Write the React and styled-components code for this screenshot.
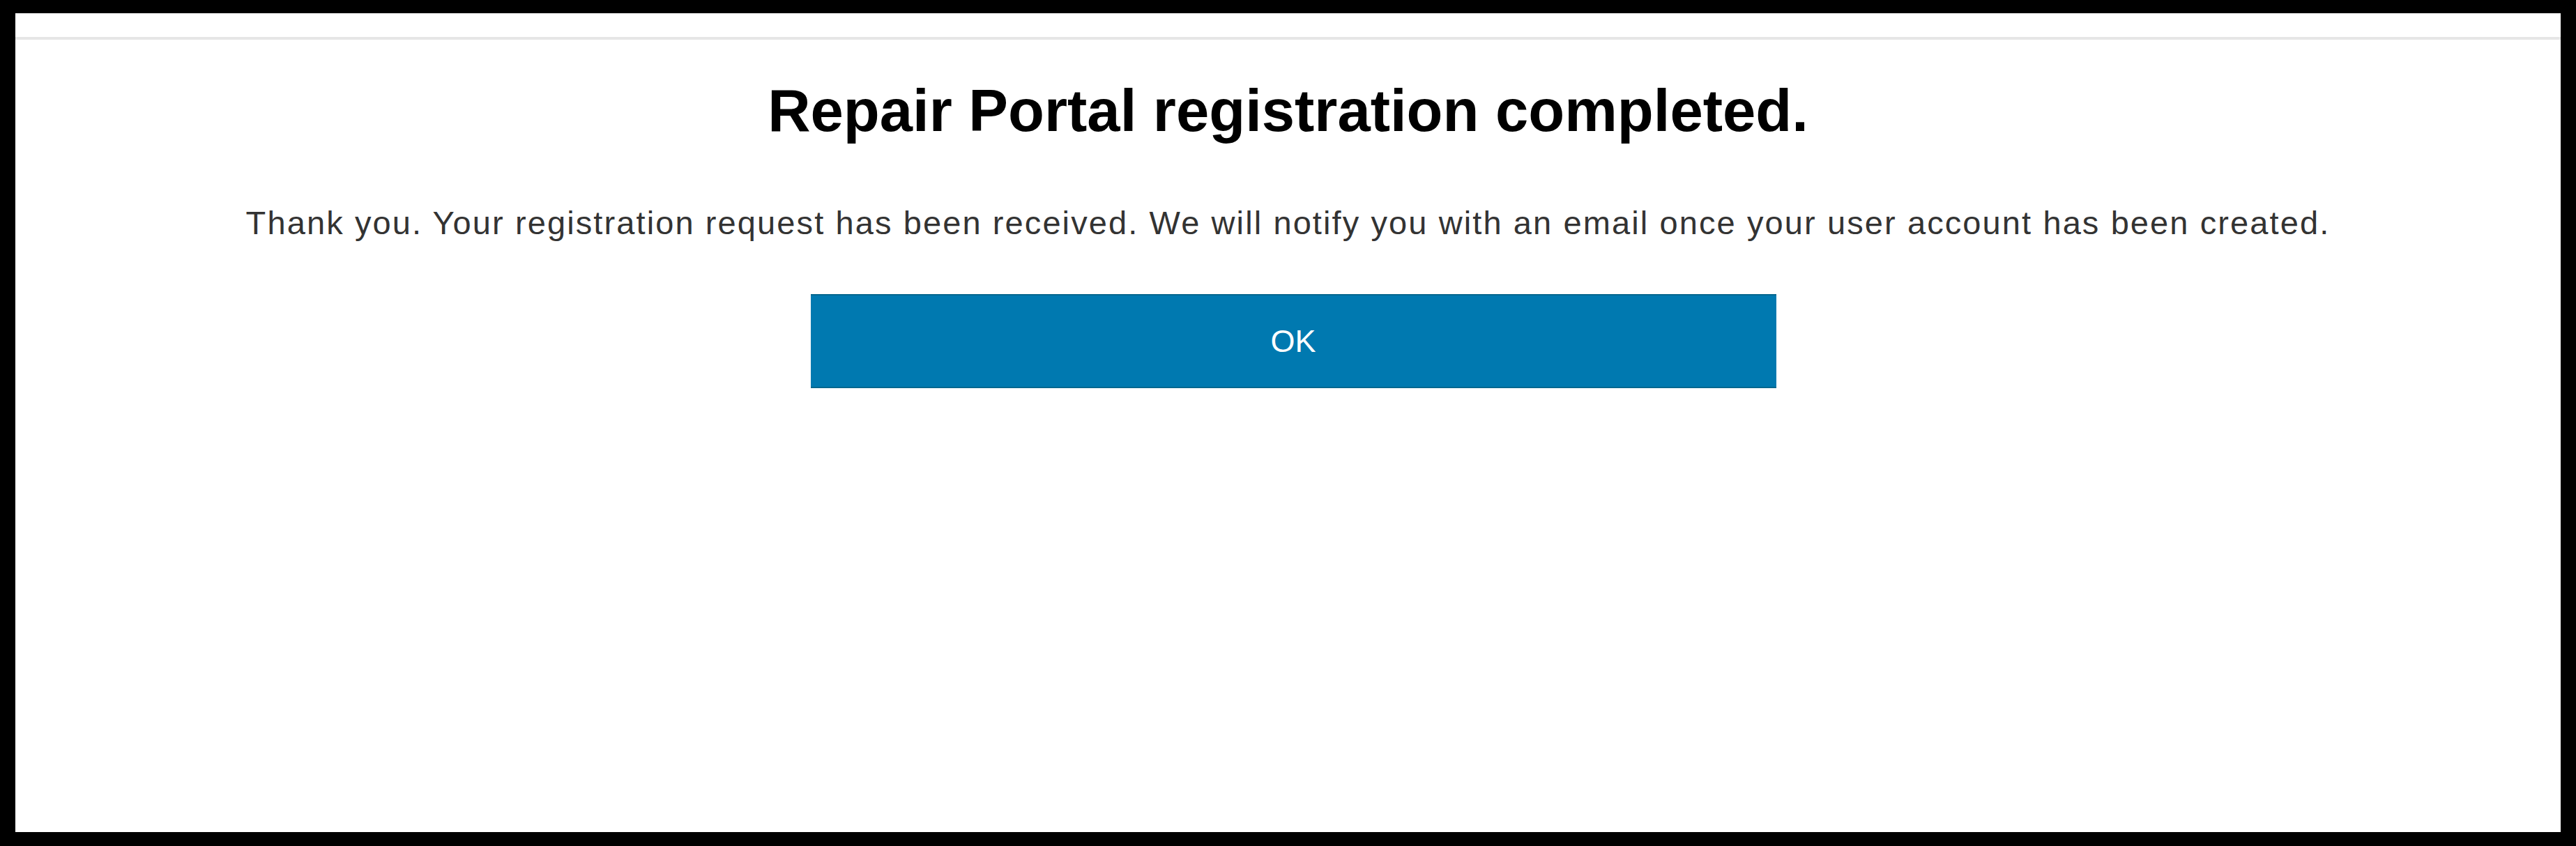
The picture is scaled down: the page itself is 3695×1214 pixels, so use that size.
import React from "react";
import styled, { createGlobalStyle } from "styled-components";

const GlobalStyle = createGlobalStyle`
  html, body {
    margin: 0;
    padding: 0;
    background: #000;
  }
  body {
    font-family: "Liberation Sans", Arial, sans-serif;
  }
`;

const Frame = styled.div`
  box-sizing: border-box;
  width: 100vw;
  height: 100vh;
  padding: 19px 22px 20px 22px;
  background: #000;
  display: flex;
`;

const Panel = styled.div`
  flex: 1;
  background: #fff;
  display: flex;
  flex-direction: column;
  align-items: center;
  padding-top: 34px;
`;

const Rule = styled.div`
  align-self: stretch;
  height: 4px;
  background: #e6e6e6;
`;

const Title = styled.h1`
  margin: 59px 0 0 0;
  font-size: 85px;
  line-height: 1;
  font-weight: bold;
  color: #000;
`;

const Message = styled.p`
  margin: 95px 0 0 0;
  font-size: 47px;
  line-height: 1;
  letter-spacing: 2.1px;
  color: #333;
`;

const OkButton = styled.button`
  margin: 79px 0 0 15px;
  width: 1385px;
  height: 135px;
  background: #0079b0;
  border: none;
  border-top: 2px solid #06678f;
  border-bottom: 2px solid #06678f;
  color: #fff;
  font-family: "Liberation Sans", Arial, sans-serif;
  font-size: 45px;
  cursor: pointer;
`;

const App = () => {
  return (
    <>
      <GlobalStyle />
      <Frame>
        <Panel>
          <Rule />
          <Title>Repair Portal registration completed.</Title>
          <Message>
            Thank you. Your registration request has been received. We will notify you with an email once your user account has been created.
          </Message>
          <OkButton>OK</OkButton>
        </Panel>
      </Frame>
    </>
  );
};

export default App;
